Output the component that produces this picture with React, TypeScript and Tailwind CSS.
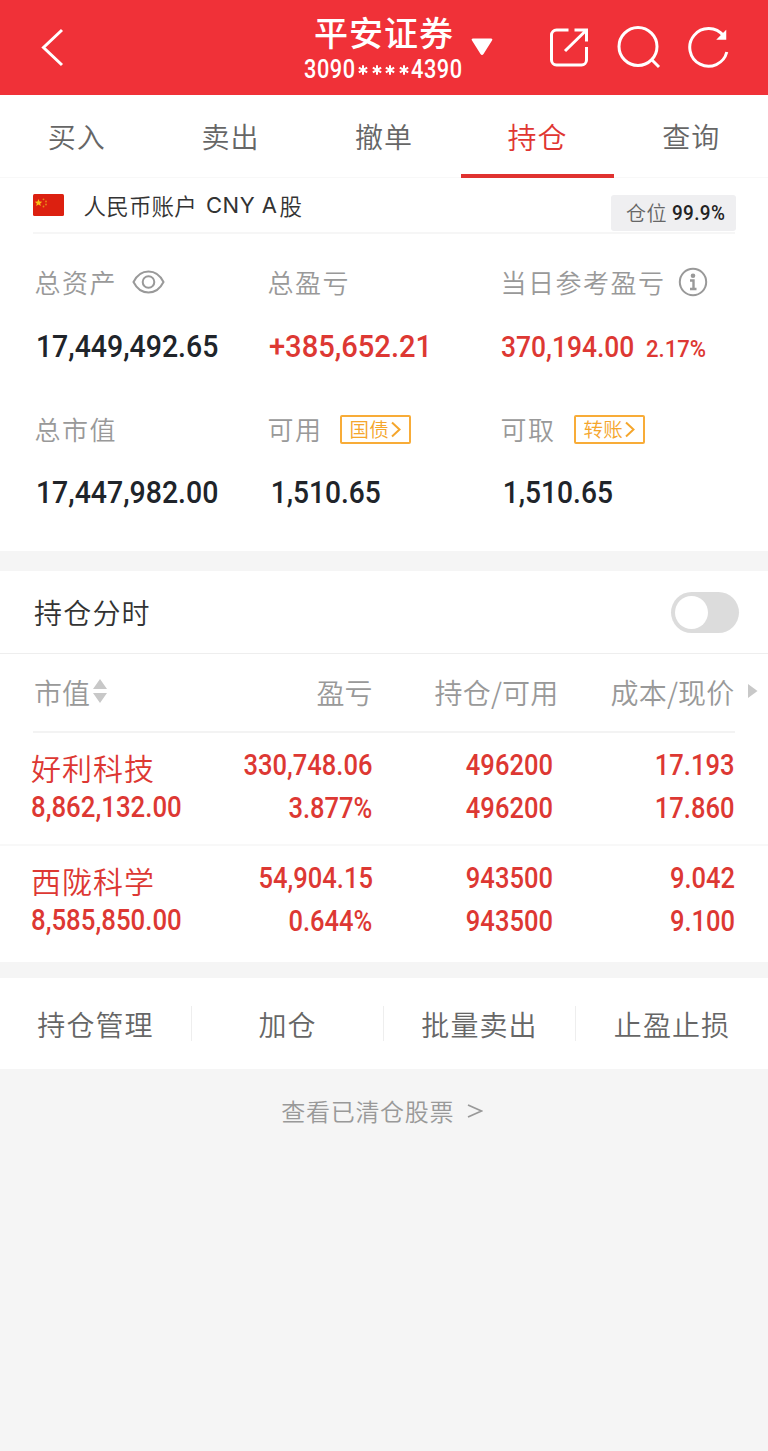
import type { ReactNode } from 'react';

const CJK = "font-['Noto_Sans_CJK_SC',sans-serif] font-[350]";

function Num({ children, className = '' }: { children: ReactNode; className?: string }) {
  return (
    <span className={`inline-block whitespace-nowrap font-['Roboto',sans-serif] font-medium ${className}`}>
      {children}
    </span>
  );
}

function Header() {
  return (
    <header className="flex h-[94.5px] bg-[#f03138] text-white">
      <svg className="mt-7 ml-10 shrink-0" width="26" height="40" viewBox="0 0 26 40" fill="none" stroke="currentColor" strokeWidth="3">
        <path d="M22 2 3.5 19.5 22 37" />
      </svg>
      <div className="ml-[237px] w-[162px] shrink-0">
        <div className="mt-[6px] flex h-[50px] items-center justify-center text-[34px] font-medium tracking-[1px] whitespace-nowrap">
          平安证券
        </div>
        <div className="flex h-[28px] items-center pl-[1px]">
          <Num className="w-[56px] origin-left scale-x-[0.87] text-[25px] leading-[28px] tracking-[0.6px]">3090</Num>
          <svg className="-ml-[3px] shrink-0" width="54" height="12" viewBox="0 0 54 12" fill="none" stroke="currentColor" strokeWidth="2">
            {[6, 20, 33, 47].map((x) => (
              <path key={x} d={`M${x} 1.2v9.6M${x - 4.2} 3.6l8.4 4.8M${x - 4.2} 8.4l8.4-4.8`} />
            ))}
          </svg>
          <Num className="origin-left scale-x-[0.87] text-[25px] leading-[28px] tracking-[0.6px]">4390</Num>
        </div>
      </div>
      <svg className="mt-[38px] ml-[6px] shrink-0" width="22" height="18" viewBox="0 0 22 18" fill="currentColor">
        <path d="M2 .5h18c1.4 0 1.7 1 1 2l-8.500 13.500c-.8 1.200-2.200 1.200-3 0L1 2.500C.3 1.500.6.5 2 .5Z" />
      </svg>
      <svg className="mt-[26px] ml-[55px] shrink-0" width="42" height="42" viewBox="0 0 42 42" fill="none" stroke="currentColor" strokeWidth="3">
        <path d="M20.500 4H8.500A5 5 0 0 0 3.500 9v25a5 5 0 0 0 5 5h25a5 5 0 0 0 5-5V21M26.500 4h12v11.500M38 4.500 17 25" />
      </svg>
      <svg className="mt-[25px] ml-[27px] shrink-0" width="44" height="44" viewBox="0 0 44 44" fill="none" stroke="currentColor" strokeWidth="3">
        <circle cx="21" cy="21.500" r="19" />
        <path d="m34 34 8 8" />
      </svg>
      <svg className="mt-[26px] ml-[27px] shrink-0" width="43" height="44" viewBox="0 0 43 44" fill="none" stroke="currentColor" strokeWidth="3">
        <path d="M38.800 26A18.800 18.800 0 1 1 35.500 10" />
        <path d="M37.500 5.500v7.500h-7.500Z" fill="currentColor" strokeWidth="1.500" />
      </svg>
    </header>
  );
}

function Tabs() {
  const tabs = ['买入', '卖出', '撤单', '持仓', '查询'];
  return (
    <nav className="grid h-[83.5px] grid-cols-5 border-b border-[#f8f8f8]">
      {tabs.map((t) =>
        t === '持仓' ? (
          <div key={t} className="flex h-[83.5px] justify-center border-b-4 border-[#e03230] text-[29px] leading-[82px] tracking-[1px] text-[#e03632]">
            {t}
          </div>
        ) : (
          <div key={t} className="flex justify-center text-[28px] leading-[83px] tracking-[1px] text-[#666]">
            {t}
          </div>
        ),
      )}
    </nav>
  );
}

function Flag() {
  return (
    <svg width="31" height="22" viewBox="0 0 31 22">
      <rect width="31" height="22" rx="1.500" fill="#dc2010" />
      <path d="m5.500 5 1 2.500 2.700.2-2 1.700.6 2.600-2.300-1.400L3.200 12l.6-2.600-2-1.700 2.700-.2Z" fill="#f8c018" />
      <g fill="#e88a18">
        <circle cx="10.500" cy="5.300" r=".9" />
        <circle cx="13" cy="7.500" r=".9" />
        <circle cx="13" cy="10.500" r=".9" />
        <circle cx="10.500" cy="12.500" r=".9" />
      </g>
    </svg>
  );
}

function Tag({ children }: { children: ReactNode }) {
  return (
    <span className="flex h-[29px] w-[71px] items-center rounded-[2px] border-2 border-[#f8ac38] pl-[8px] text-[19.500px] leading-none tracking-[0.300px] whitespace-nowrap text-[#f5a62c]">
      {children}
      <svg className="ml-px shrink-0" width="12" height="17" viewBox="0 0 12 17" fill="none" stroke="currentColor" strokeWidth="2">
        <path d="m2 1.500 7.500 7L2 15.500" />
      </svg>
    </span>
  );
}

const label = 'flex h-[40px] items-center text-[26px] tracking-[1.500px] text-[#999] whitespace-nowrap leading-[40px]';

function Summary() {
  return (
    <section className="h-[373px]">
      <div className="mx-[33px] flex h-[56px] items-start border-b-2 border-[#f6f6f6]">
        <div className="mt-[16px]">
          <Flag />
        </div>
        <div className="mt-[7px] ml-[19.500px] flex text-[22.500px] leading-[40px] tracking-[0.200px] whitespace-nowrap text-[#333]">
          人民币账户
          <span className="ml-[9px] font-['Inter',sans-serif] text-[22px] font-normal tracking-[0.500px]">CNY A</span>
          <span className="ml-[2px]">股</span>
        </div>
        <div className="mt-[17px] -mr-px ml-auto flex h-[36px] w-[125px] items-center rounded-[3px] bg-[#efeff1] pl-[15px] text-[20px] tracking-[0.400px] whitespace-nowrap text-[#666]">
          仓位
          <Num className="ml-[5px] origin-left scale-x-[0.9] pt-[2px] text-[21px] text-[#222]">99.9%</Num>
        </div>
      </div>
      <div className="grid grid-cols-[233px_233px_1fr] pl-[34.500px]">
        <div className="pt-[27.500px]">
          <div className={label}>
            总资产
            <svg className="ml-[15px]" width="33" height="24" viewBox="0 0 33 24" fill="none" stroke="currentColor" strokeWidth="2">
              <path d="M1.500 12C5 5 10 1.500 16.500 1.500S28 5 31.500 12C28 19 23 22.500 16.500 22.500S5 19 1.500 12Z" />
              <circle cx="16.500" cy="12" r="5.800" />
            </svg>
          </div>
          <Num className="mt-[24.500px] block origin-left scale-x-[0.89] pl-px text-[32px] leading-[40px] text-[#20242a]">17,449,492.65</Num>
        </div>
        <div className="pt-[27.500px]">
          <div className={label}>总盈亏</div>
          <Num className="mt-[24.500px] block origin-left scale-x-[0.91] pl-px text-[32px] leading-[40px] text-[#dd3833]">+385,652.21</Num>
        </div>
        <div className="pt-[27.500px]">
          <div className={label}>
            当日参考盈亏
            <svg className="ml-[12px]" width="30" height="30" viewBox="0 0 30 30" fill="none" stroke="currentColor" strokeWidth="2">
              <circle cx="15" cy="15" r="13.200" />
              <circle cx="15" cy="8.800" r="2.300" fill="currentColor" stroke="none" />
              <path d="M12 13.500h3.500v8M12 22h6.500" strokeWidth="2.400" />
            </svg>
          </div>
          <div className="mt-[24.500px] flex h-[40px] items-baseline text-[#dd3833]">
            <Num className="w-[145.500px] origin-left scale-x-[0.88] text-[30px] leading-[42px]">370,194.00</Num>
            <Num className="origin-left scale-x-[0.92] text-[24px] leading-[40px]">2.17%</Num>
          </div>
        </div>
        <div className="pt-[43px]">
          <div className={label}>总市值</div>
          <Num className="mt-[23px] block origin-left scale-x-[0.89] pl-px text-[32px] leading-[40px] text-[#20242a]">17,447,982.00</Num>
        </div>
        <div className="pt-[43px]">
          <div className={label}>
            <span className="w-[72px]">可用</span>
            <Tag>国债</Tag>
          </div>
          <Num className="mt-[23px] block origin-left scale-x-[0.88] pl-[3px] text-[32px] leading-[40px] text-[#20242a]">1,510.65</Num>
        </div>
        <div className="pt-[43px]">
          <div className={label}>
            <span className="w-[73px]">可取</span>
            <Tag>转账</Tag>
          </div>
          <Num className="mt-[23px] block origin-left scale-x-[0.88] pl-[2px] text-[32px] leading-[40px] text-[#20242a]">1,510.65</Num>
        </div>
      </div>
    </section>
  );
}

const columns = 'grid grid-cols-[200px_141.500px_180px_182px] pl-[31px]';

const holdings = [
  { name: '好利科技', value: '8,862,132.00', profit: '330,748.06', rate: '3.877%', held: '496200', free: '496200', cost: '17.193', price: '17.860' },
  { name: '西陇科学', value: '8,585,850.00', profit: '54,904.15', rate: '0.644%', held: '943500', free: '943500', cost: '9.042', price: '9.100' },
];

function Pair({ top, bottom }: { top: string; bottom: string }) {
  return (
    <div className="flex flex-col items-end pt-[11px]">
      <Num className="origin-right scale-x-[0.88] text-[29px] leading-[43px]">{top}</Num>
      <Num className="origin-right scale-x-[0.88] text-[29px] leading-[43px]">{bottom}</Num>
    </div>
  );
}

function Holdings() {
  return (
    <section>
      <div className="flex h-[83px] items-center justify-between border-b border-[#eee] pr-[29px] pl-[34px]">
        <span className="text-[28px] tracking-[1.200px] text-[#333]">持仓分时</span>
        <span className="flex h-[41px] w-[68px] items-center rounded-full bg-[#dcdcdc] pl-[4px]">
          <span className="h-[33px] w-[33px] rounded-full bg-white" />
        </span>
      </div>
      <div className="flex h-[77px] items-center text-[28px] leading-[77px] whitespace-nowrap text-[#999]">
        <div className="flex w-[200px] items-center pl-[34px]">
          市值
          <svg className="-mt-[4px] ml-[3px]" width="14" height="24" viewBox="0 0 14 24" fill="#c8c8c8">
            <path d="M7 0 14 10H0ZM0 14h14L7 24Z" />
          </svg>
        </div>
        <div className="w-[172.500px] text-right">盈亏</div>
        <div className="w-[186px] text-right tracking-[0.200px]">持仓/可用</div>
        <div className="w-[176px] text-right tracking-[0.200px]">成本/现价</div>
        <svg className="-mt-[4px] ml-[12.500px]" width="11" height="14" viewBox="0 0 11 14" fill="#c8c8c8">
          <path d="M1 0 10.500 7 1 14Z" />
        </svg>
      </div>
      <div className="mx-[33px] h-[2px] bg-[#f3f3f3]" />
      {holdings.map((h, i) => (
        <div
          key={h.name}
          className={`${columns} text-[#dd3833] ${i === 0 ? 'h-[113px] border-b-2 border-[#f8f8f8]' : 'h-[116px]'}`}
        >
          <div className="pt-[14px]">
            <div className="h-[40px] text-[30px] leading-[40px] tracking-[1px]">{h.name}</div>
            <Num className="-mt-px block origin-left scale-x-[0.89] text-[29px] leading-[43px]">{h.value}</Num>
          </div>
          <Pair top={h.profit} bottom={h.rate} />
          <Pair top={h.held} bottom={h.free} />
          <Pair top={h.cost} bottom={h.price} />
        </div>
      ))}
    </section>
  );
}

function Actions() {
  const actions = ['持仓管理', '加仓', '批量卖出', '止盈止损'];
  return (
    <div className="flex h-[91px] items-center bg-white text-[28px] text-[#666]">
      {actions.map((a, i) => (
        <div
          key={a}
          className={`flex h-[35px] w-48 items-center justify-center tracking-[1.100px] whitespace-nowrap ${i < 3 ? 'border-r border-[#eee]' : ''}`}
        >
          {a}
        </div>
      ))}
    </div>
  );
}

export default function App() {
  return (
    <div className={`min-h-[1451px] w-[768px] overflow-hidden bg-[#f5f5f5] ${CJK}`}>
      <Header />
      <div className="bg-white">
        <Tabs />
        <Summary />
      </div>
      <div className="mt-[20px] bg-white">
        <Holdings />
      </div>
      <div className="mt-[16px]">
        <Actions />
      </div>
      <div className="flex h-[84px] items-center justify-center pr-[4px] text-[24px] tracking-[0.700px] text-[#999]">
        查看已清仓股票
        <svg className="ml-[12.500px]" width="16" height="16" viewBox="0 0 16 16" fill="none" stroke="currentColor" strokeWidth="1.800">
          <path d="M1 2 14.500 8 1 14" />
        </svg>
      </div>
    </div>
  );
}
